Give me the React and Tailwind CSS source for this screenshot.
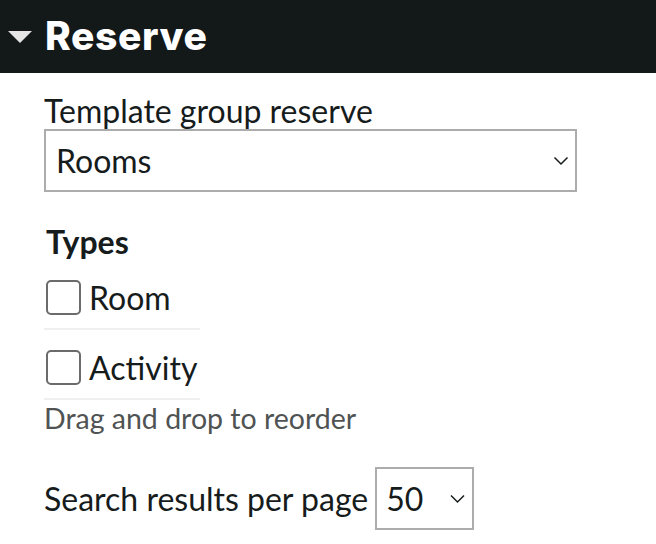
import React from 'react';

const Chevron = ({ className }) => (
  <svg viewBox="0 0 16 10" className={className} fill="none" stroke="currentColor" strokeWidth="1.5">
    <path d="M1.5 1.5 L8 8 L14.5 1.5" />
  </svg>
);

const TypeRow = ({ label }) => (
  <div className="w-[156px] h-[70px] border-b-2 border-[#efefef] pt-[20px] flex items-start gap-[8px]">
    <span className="ml-[2px] w-[35px] h-[35px] rounded-[5px] border-2 border-[#6b6b6b] bg-white shrink-0"></span>
    <span className="text-[32px] leading-[35px] text-[#161b1c]">{label}</span>
  </div>
);

export default function App() {
  return (
    <div className="w-[656px] h-[544px] bg-white overflow-hidden" style={{ fontFamily: 'Lato, "Liberation Sans", sans-serif' }}>
      <div className="h-[73px] bg-[#131819] flex items-center pl-[8px] gap-[13px]">
        <svg viewBox="0 0 24 14" className="w-[24px] h-[14px] mt-[2px]">
          <path d="M0 0 H24 L12 12 Z" fill="#e4e4e4" />
        </svg>
        <h1 className="text-white text-[39px] font-extrabold tracking-[0.6px]" style={{ fontFamily: 'Inter, "Open Sans", sans-serif' }}>
          Reserve
        </h1>
      </div>

      <div className="pl-[44px] pt-[20px]">
        <div className="text-[32px] leading-[36px] text-[#161b1c]">Template group reserve</div>
        <div className="w-[533px] h-[63px] border-2 border-[#acacac] flex items-center justify-between pl-[10px] pr-[6px]">
          <span className="text-[32px] text-[#161b1c]">Rooms</span>
          <Chevron className="w-[16px] h-[10px] text-[#161b1c]" />
        </div>

        <div className="mt-[32px] pl-[2px] text-[32px] leading-[36px] font-bold text-[#161b1c]">Types</div>
        <div className="flex flex-col">
          <TypeRow label="Room" />
          <TypeRow label="Activity" />
        </div>
        <div className="text-[28.5px] leading-[36px] text-[#4f5353]">Drag and drop to reorder</div>

        <div className="mt-[31px] flex items-center gap-[7px]">
          <span className="text-[32px] text-[#161b1c]">Search results per page</span>
          <div className="w-[99px] h-[63px] border-2 border-[#acacac] flex items-center justify-between pl-[9px] pr-[6px]">
            <span className="text-[32px] text-[#161b1c]">50</span>
            <Chevron className="w-[17px] h-[10px] text-[#161b1c]" />
          </div>
        </div>
      </div>
    </div>
  );
}
